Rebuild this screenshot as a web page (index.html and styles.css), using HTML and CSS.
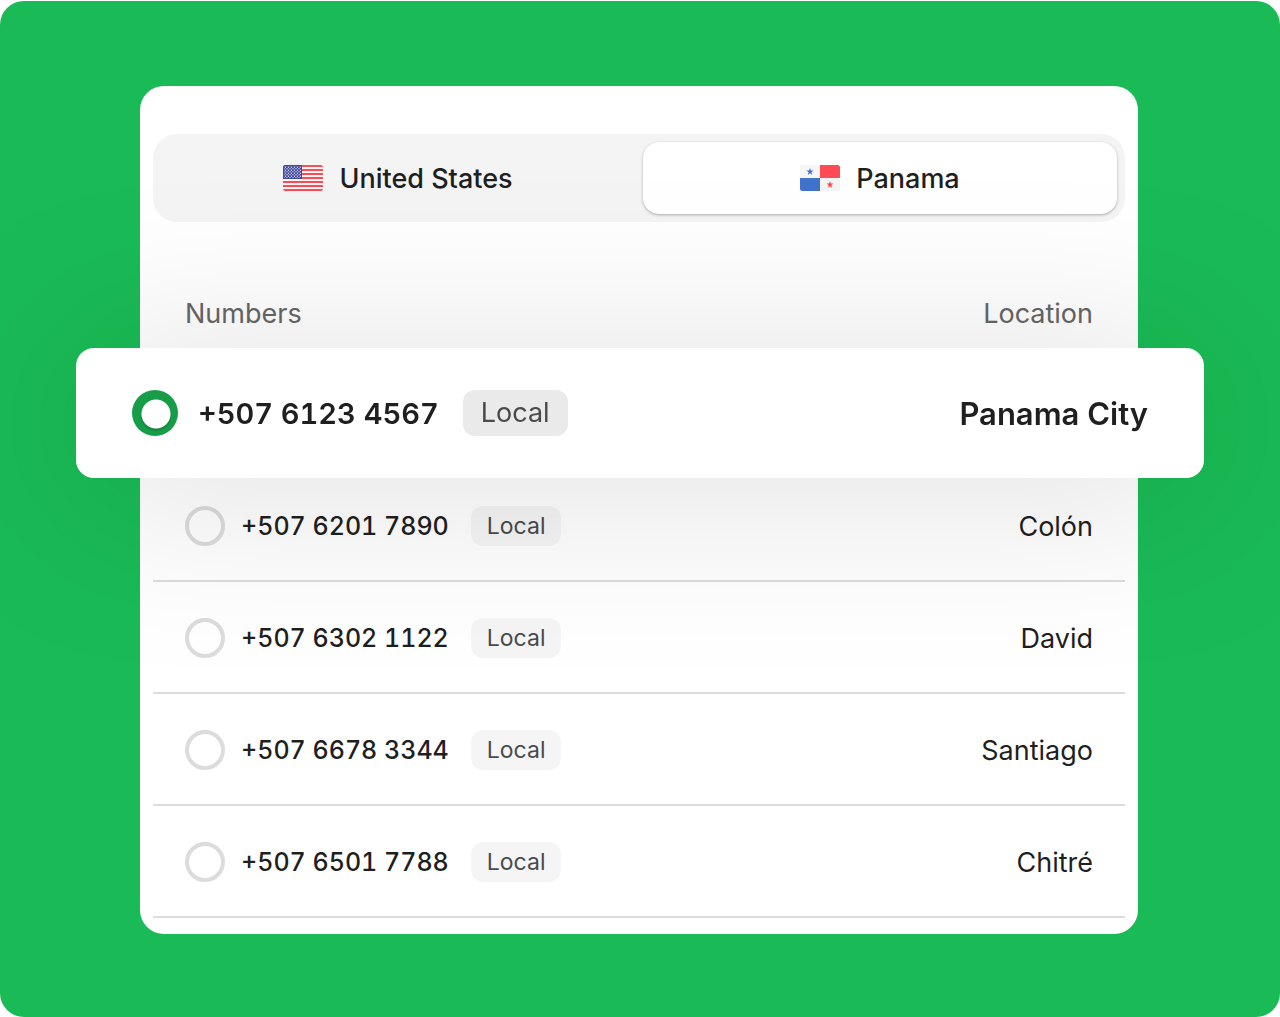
FILE: index.html
```html
<!DOCTYPE html>
<html lang="en">
<head>
    <meta charset="UTF-8">
    <meta name="viewport" content="width=device-width, initial-scale=1.0">
    <title>Choose a number</title>
    <link rel="stylesheet" href="styles.css">
</head>
<body>
    <main class="stage">
        <div class="card">
            <div class="tabs" role="tablist">
                <button type="button" class="tab" role="tab" aria-selected="false">
                    <svg class="flag" viewBox="0 0 40 26" aria-hidden="true">
                        <defs>
                            <clipPath id="flagClip"><rect width="40" height="26" rx="2.5"/></clipPath>
                            <pattern id="stars" width="3" height="3" patternUnits="userSpaceOnUse">
                                <circle cx="1" cy="0.8" r="0.7" fill="#dcdcf0"/>
                                <circle cx="2.5" cy="2.3" r="0.7" fill="#dcdcf0"/>
                            </pattern>
                        </defs>
                        <g clip-path="url(#flagClip)">
                            <rect width="40" height="26" fill="#f7f7f7"/>
                            <path d="M0 1H40M0 5H40M0 9H40M0 13H40M0 17H40M0 21H40M0 25H40" stroke="#ff4b55" stroke-width="2"/>
                            <rect width="19" height="14" fill="#41479b"/>
                            <rect x="1" y="1" width="17" height="12" fill="url(#stars)"/>
                        </g>
                    </svg>
                    United States
                </button>
                <button type="button" class="tab active" role="tab" aria-selected="true">
                    <svg class="flag" viewBox="0 0 40 26" aria-hidden="true">
                        <g clip-path="url(#flagClip)">
                            <rect width="40" height="26" fill="#f5f5f5"/>
                            <rect x="20" width="20" height="13" fill="#ff4b55"/>
                            <rect y="13" width="20" height="13" fill="#4173cd"/>
                            <path fill="#4173cd" d="M10 3L10.9 5.6L13.5 5.6L11.4 7.2L12.2 9.9L10 8.3L7.8 9.9L8.6 7.2L6.5 5.6L9.1 5.6Z"/>
                            <path fill="#ff4b55" d="M30 16L30.9 18.6L33.5 18.6L31.4 20.2L32.2 22.9L30 21.3L27.8 22.9L28.6 20.2L26.5 18.6L29.1 18.6Z"/>
                        </g>
                    </svg>
                    Panama
                </button>
            </div>

            <table class="numbers">
                <thead>
                    <tr class="head">
                        <th scope="col">Numbers</th>
                        <th scope="col">Location</th>
                    </tr>
                </thead>
                <tbody>
                    <tr class="row selected">
                        <td class="pick">
                            <input type="radio" class="radio" name="number" id="n1" checked>
                            <label class="phone" for="n1">+507 6123 4567</label>
                            <span class="badge">Local</span>
                        </td>
                        <td>Panama City</td>
                    </tr>
                    <tr class="row">
                        <td class="pick">
                            <input type="radio" class="radio" name="number" id="n2">
                            <label class="phone" for="n2">+507 6201 7890</label>
                            <span class="badge">Local</span>
                        </td>
                        <td>Colón</td>
                    </tr>
                    <tr class="row">
                        <td class="pick">
                            <input type="radio" class="radio" name="number" id="n3">
                            <label class="phone" for="n3">+507 6302 1122</label>
                            <span class="badge">Local</span>
                        </td>
                        <td>David</td>
                    </tr>
                    <tr class="row">
                        <td class="pick">
                            <input type="radio" class="radio" name="number" id="n4">
                            <label class="phone" for="n4">+507 6678 3344</label>
                            <span class="badge">Local</span>
                        </td>
                        <td>Santiago</td>
                    </tr>
                    <tr class="row">
                        <td class="pick">
                            <input type="radio" class="radio" name="number" id="n5">
                            <label class="phone" for="n5">+507 6501 7788</label>
                            <span class="badge">Local</span>
                        </td>
                        <td>Chitré</td>
                    </tr>
                </tbody>
            </table>
        </div>
    </main>
</body>
</html>
```
FILE: styles.css
```css
* {
    box-sizing: border-box;
}
body {
    margin: 0;
    padding-top: 1px;
    background: #fff;
    color: #1f1f1f;
    font-family: Inter, "Liberation Sans", sans-serif;
    font-size: 27px;
}
.stage {
    padding: 85px 142px 83px 140px;
    background: #1abb56;
    border-radius: 24px;
    overflow: hidden;
}
.card {
    padding: 48px 13px 16px;
    background: #fff;
    border-radius: 24px;
}

/* country switch */
.tabs {
    display: flex;
    gap: 8px;
    padding: 8px;
    background: #f4f4f4;
    border-radius: 24px;
}
.tab {
    flex: 1;
    display: flex;
    align-items: center;
    justify-content: center;
    gap: 16px;
    height: 72px;
    padding: 0;
    border: 0;
    border-radius: 16px;
    background: none;
    color: inherit;
    font: inherit;
    font-weight: 500;
}
.tab.active {
    background: #fff;
    box-shadow: 0 1px 3px rgba(0, 0, 0, 0.3);
}
.flag {
    width: 40px;
    height: 26px;
}

/* number list, rows are flex so the selected one can stick out of the card */
.numbers,
.numbers thead,
.numbers tbody {
    display: block;
}
.head,
.row {
    display: flex;
    align-items: center;
    justify-content: space-between;
    padding: 0 32px;
}
.head {
    height: 70px;
    margin-top: 56px;
    color: #666;
}
th,
td {
    padding: 0;
    font-weight: 400;
}
.row {
    height: 112px;
    box-shadow: inset 0 -2px #dcdcdc;
}
.pick {
    display: flex;
    align-items: center;
}
.radio {
    appearance: none;
    width: 40px;
    height: 40px;
    margin: 0 16px 0 0;
    border: 4px solid #dcdcdc;
    border-radius: 50%;
}
.phone {
    margin-right: 22px;
    font-size: 25px;
    font-weight: 500;
    font-variant-numeric: tabular-nums;
}
.badge {
    padding: 0 16px;
    border-radius: 12px;
    background: rgba(0, 0, 0, 0.04);
    color: #4a4a4a;
    font-size: 23px;
    line-height: 40px;
}

.selected {
    position: relative;
    z-index: 1;
    height: 130px;
    margin: 0 -79px -8px -77px;
    padding: 0 56px;
    background: #fff;
    border-radius: 18px;
    box-shadow: none;
    filter: drop-shadow(0 12px 90px rgba(0, 0, 0, 0.14));
}
.selected td {
    font-size: 31px;
    font-weight: 600;
}
.selected .radio {
    width: 46px;
    height: 46px;
    margin-right: 20px;
    border: 0;
    background: radial-gradient(circle at 24px 24px, #fff 14px, transparent 15px), radial-gradient(circle at 24px 26px, #11803a 13px, #179c48 16px);
}
.selected .phone {
    margin-right: 24px;
    font-size: 29px;
    font-weight: 600;
}
.selected .badge {
    padding: 0 18px;
    background: #eaeaea;
    font-size: 27px;
    font-weight: 400;
    line-height: 46px;
}
```
